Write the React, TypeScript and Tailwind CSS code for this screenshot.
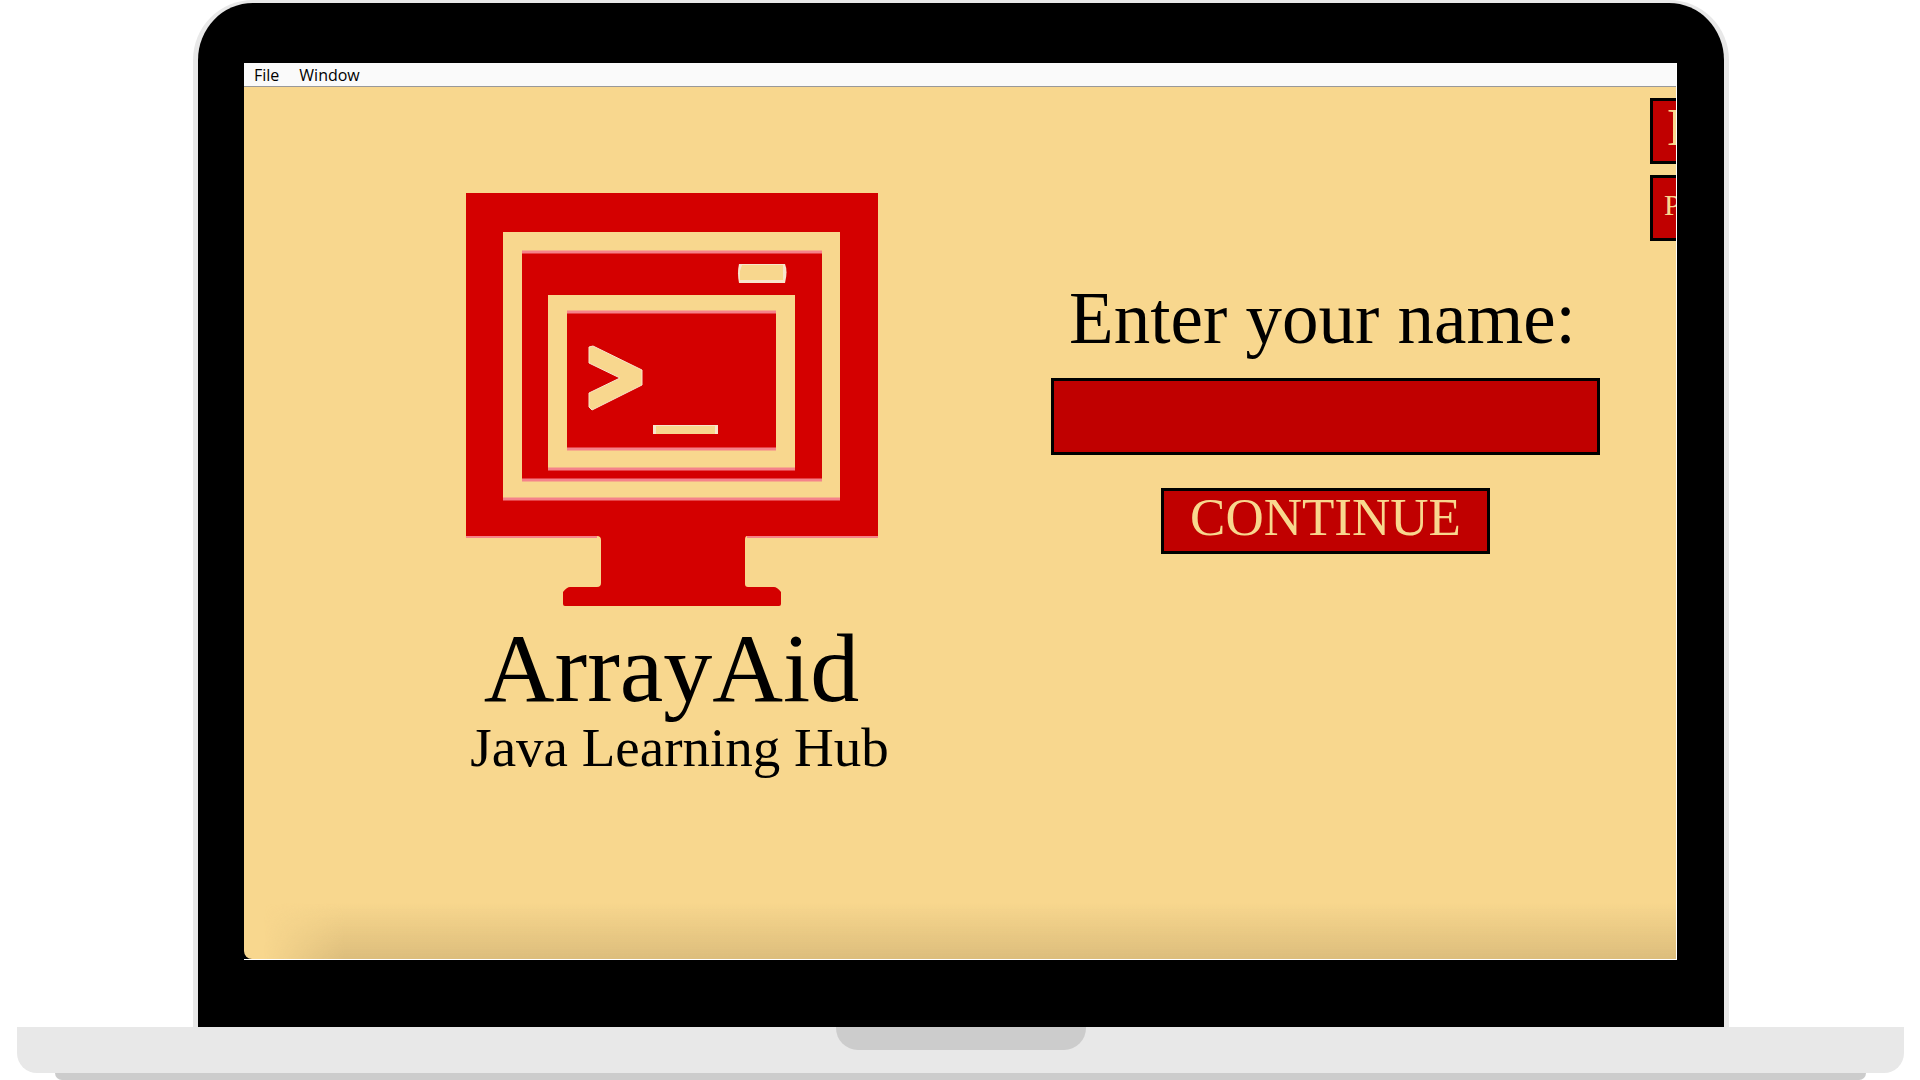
import { useState } from "react";

const serif = "font-['Liberation_Serif',serif]";
const box = "border-3 border-black bg-[#c00000]";

function MonitorLogo() {
  return (
    <svg viewBox="0 0 412 413" className="block w-[412px]" role="img" aria-label="ArrayAid logo">
      <path
        fill="#d40000"
        d="M0 0H412V343H281Q279 343 279 347V391Q279 394 282 394H308Q311 394 315 399V411Q315 413 313 413H99Q97 413 97 411V399Q101 394 104 394H131Q135 394 135 390V347Q135 343 131 343H0Z"
      />
      <path fill="none" stroke="#f5828a" strokeWidth="2" d="M0 344H131M281 344H412" />
      <path fill="#f8d78e" d="M37 39H374V307H37Z" />
      <path fill="#d40000" d="M56 58H356V287H56Z" />
      <path fill="#f8d78e" d="M82 102H329V277H82Z" />
      <path fill="#d40000" d="M101 119H310V255H101Z" />
      <path
        fill="none"
        stroke="#f5828a"
        strokeWidth="3"
        d="M56 59H356M37 306H374M56 287H356M82 276H329M101 119H310M101 256H310"
      />
      <path fill="#f8e6cc" d="M273 71H319Q322 78 319 90H273Q271 80 273 71Z" />
      <path fill="#f8d78e" d="M276 72H317V87H274V78Z" />
      <path
        fill="#f8d78e"
        stroke="#f8e6cc"
        strokeWidth="1"
        d="M123 154L127 153L176 177V192L126 217L123 214V200L154 185L123 170Z"
      />
      <path fill="#f8e6cc" d="M187 232H252V241H187Z" />
      <path fill="#f8d78e" d="M190 233H249V241H190Z" />
    </svg>
  );
}

export default function App() {
  const [name, setName] = useState("");
  return (
    <div className={`flex h-screen flex-col items-center overflow-hidden bg-white ${serif}`}>
      {/* Lid */}
      <div className="ml-0.5 flex w-4/5 grow flex-col rounded-t-[60px] border-x-5 border-t-3 border-[#e8e8e8] bg-black pt-[60px] pr-[47px] pb-[67px] pl-[46px]">
        <div className="flex grow flex-col overflow-hidden border-r border-b border-white">
          <nav className="flex h-6 shrink-0 items-start gap-5 border-b border-[#999] bg-[#fafafa] px-2.5 font-['Open_Sans',sans-serif] text-[16px] leading-6 text-black">
            <button type="button">File</button>
            <button type="button">Window</button>
          </nav>
          <main className="relative flex grow items-start overflow-hidden rounded-bl-lg bg-[#f8d78e] text-black">
            <div className="absolute bottom-0 left-0 h-14 w-full bg-linear-to-t from-[#dcbd7c] to-transparent mask-[linear-gradient(to_right,transparent_20px,black_100px)]" />
            <section className="flex grow flex-col items-center pt-[106px] pl-12">
              <MonitorLogo />
              <h1 className="mt-3.5 text-[98px] leading-24">ArrayAid</h1>
              <p className="pt-0.5 pl-4 text-[55px] leading-15">Java Learning Hub</p>
            </section>
            <form
              className="mr-[76px] flex flex-col items-center pt-[192px]"
              onSubmit={(e) => e.preventDefault()}
            >
              <label htmlFor="name" className="pr-1.5 text-[73px] leading-20">
                Enter your name:
              </label>
              <input
                id="name"
                value={name}
                onChange={(e) => setName(e.target.value)}
                className={`mt-[19px] h-[77px] w-[549px] px-4 text-[53px] text-[#f8d78e] outline-none ${box}`}
              />
              <button
                type="submit"
                className={`mt-[33px] h-[66px] w-[329px] pb-2 text-[53px] leading-13 text-[#f8d78e] ${box}`}
              >
                CONTINUE
              </button>
            </form>
            <div className="absolute top-[11px] left-full -ml-[26px] flex flex-col gap-[11px] text-[#f8d78e]">
              <button type="button" className={`h-[66px] w-50 pb-2 pl-[14px] text-left text-[53px] leading-13 ${box}`}>
                E
              </button>
              <button type="button" className={`h-[66px] w-50 pb-1.5 pl-[11px] text-left text-[30px] leading-10 ${box}`}>
                P
              </button>
            </div>
          </main>
        </div>
      </div>
      {/* Base */}
      <div className="mr-4 ml-[17px] flex h-[46px] shrink-0 justify-center self-stretch rounded-b-[20px] bg-[#e8e8e8]">
        <div className="h-[23px] w-[250px] rounded-b-[22px] bg-[#ccc]" />
      </div>
      <div className="mr-[54px] ml-[55px] h-[7px] shrink-0 self-stretch rounded-b-lg bg-[#ccc]" />
    </div>
  );
}
